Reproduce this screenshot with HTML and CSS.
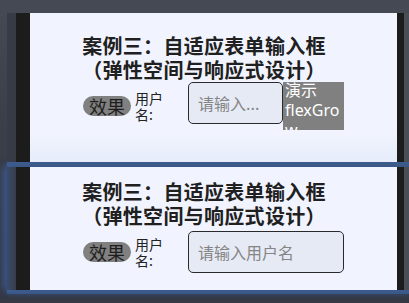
FILE: index.html
```html
<!DOCTYPE html>
<html lang="zh-CN">
<head>
<meta charset="utf-8">
<title>案例三</title>
<link rel="stylesheet" href="styles.css">
</head>
<body>
  <div class="frame frame-top">
    <div class="strip-l"></div>
    <div class="bezel"></div>
    <div class="screen screen-top">
      <div class="col">
        <div class="title">案例三：自适应表单输入框<br>（弹性空间与响应式设计）</div>
        <div class="row">
          <span class="pill">效果</span>
          <span class="label">用户名:</span>
          <div class="field">
            <div class="input input-short"><span class="ph">请输入...</span></div>
            <div class="demo"><div class="demo-text">演示flexGrow</div></div>
          </div>
        </div>
      </div>
    </div>
    <div class="bezel bezel-r"></div>
    <div class="strip-r"></div>
  </div>
  <div class="sep"></div>
  <div class="frame frame-bottom">
    <div class="strip-l strip-glow"></div>
    <div class="bezel"></div>
    <div class="screen screen-bottom">
      <div class="col">
        <div class="title">案例三：自适应表单输入框<br>（弹性空间与响应式设计）</div>
        <div class="row">
          <span class="pill">效果</span>
          <span class="label">用户名:</span>
          <div class="field">
            <div class="input input-full"><span class="ph">请输入用户名</span></div>
          </div>
        </div>
      </div>
    </div>
    <div class="bezel bezel-r"></div>
    <div class="strip-r"></div>
  </div>
  <div class="sep sep-bottom"></div>
</body>
</html>
```
FILE: styles.css
```css
html, body {
  margin: 0;
  padding: 0;
}
body {
  width: 409px;
  height: 303px;
  overflow: hidden;
  background: linear-gradient(180deg, #454a55 0%, #3a3f4a 40%, #343944 100%);
  padding-top: 13px;
  box-sizing: border-box;
  font-family: "Noto Sans", "Noto Sans CJK SC", sans-serif;
  color: #222;
}
.frame {
  display: flex;
  margin-left: 7px;
}
.frame-top { height: 149px; }
.frame-bottom { height: 123px; }
.strip-l {
  width: 8px;
  background: #363c47;
}
.strip-glow {
  background: linear-gradient(90deg, #3a4a66, #354055);
  box-shadow: -4px 0 6px rgba(60, 110, 200, 0.55);
}
.bezel {
  width: 14px;
  background: #1c1c1c;
  border-left: 1px solid #3c3c3c;
}
.bezel-r {
  width: 7px;
  border-left: 0;
}
.strip-r {
  width: 5px;
  background: #4a4e56;
}
.screen {
  flex: 1;
  background: #f1f4fe;
  overflow: hidden;
}
.screen-top {
  background: linear-gradient(180deg, #f1f4fe 0%, #f1f4fe 80%, #e6ecfb 100%);
  padding-top: 21px;
}
.screen-bottom {
  padding-top: 13px;
}
.col {
  margin-left: 52px;
  width: 264px;
}
.title {
  width: 244px;
  text-align: center;
  font-family: "Noto Sans CJK SC", sans-serif;
  font-weight: 700;
  font-size: 20px;
  letter-spacing: 0.3px;
  line-height: 24px;
  color: #202020;
  white-space: nowrap;
}
.row {
  display: flex;
  align-items: center;
  height: 48px;
  margin-left: 1px;
}
.pill {
  height: 20px;
  line-height: 20px;
  padding: 0 6px;
  border-radius: 10px;
  background: #808080;
  font-family: "Noto Sans CJK SC", sans-serif;
  font-size: 18px;
  color: #1e1e1e;
}
.label {
  width: 30px;
  margin-left: 4px;
  font-family: "Noto Sans CJK SC", sans-serif;
  font-size: 14px;
  line-height: 16px;
  color: #222;
}
.field {
  display: flex;
  align-items: flex-start;
  margin-left: 23px;
}
.input {
  box-sizing: border-box;
  height: 42px;
  border: 1px solid #2a2a2a;
  border-radius: 5px;
  background: #e6eaf5;
  display: flex;
  align-items: center;
  padding-left: 9px;
}
.input-short { width: 95px; }
.input-full { width: 156px; }
.ph {
  font-family: "Noto Sans CJK SC", sans-serif;
  font-size: 16px;
  color: #858585;
  white-space: nowrap;
}
.demo {
  width: 61px;
  height: 48px;
  box-sizing: border-box;
  padding-left: 2px;
  background: #808080;
  color: #fff;
  overflow: hidden;
}
.demo-text {
  margin-top: -2px;
  font-size: 16px;
  line-height: 20px;
  overflow-wrap: anywhere;
}
.sep {
  height: 5px;
  margin-left: 7px;
  background: linear-gradient(180deg, #3d5c8e, #3a5685);
  box-shadow: 0 0 5px rgba(60, 110, 200, 0.5);
}
.sep-bottom {
  height: 4px;
}
```
